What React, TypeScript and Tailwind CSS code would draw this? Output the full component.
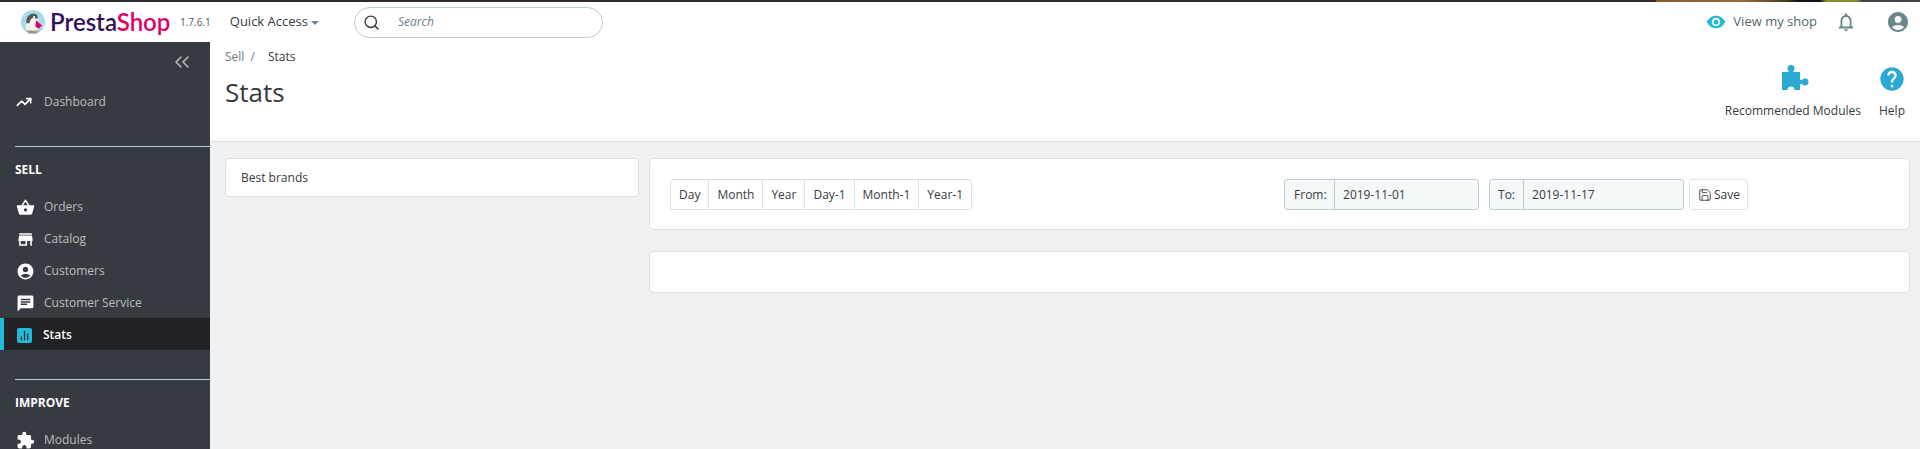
import React from "react";
import { BarChart2, ChevronsLeft, Save, Search, TrendingUp } from "lucide-react";
import { MdAccountCircle, MdChat, MdExtension, MdHelp, MdNotificationsNone, MdRemoveRedEye, MdShoppingBasket, MdStore } from "react-icons/md";

const font = { fontFamily: '"Open Sans", sans-serif' };

const SideItem: React.FC<{ icon: React.ReactNode; label: string; active?: boolean }> = ({ icon, label, active }) => (
  <div
    className={
      active
        ? "h-8 shrink-0 pt-[2px] flex items-center bg-[#202226] border-l-4 border-[#25b9d7] pl-[13px] text-white text-[12px] font-semibold"
        : "h-8 shrink-0 pt-[2px] flex items-center pl-4 text-[#bebebe] text-[12px]"
    }
  >
    <span className={active ? "w-[26px] flex items-center shrink-0" : "w-[28px] flex items-center shrink-0"}>{icon}</span>
    {label}
  </div>
);

const Logo = () => (
  <svg width="24" height="24" viewBox="0 0 20 20" className="block">
    <circle cx="10" cy="10" r="10" fill="#a6dbe7" />
    <path d="M4.5 18 C3.5 11 5 4 10 3.5 C14 3.5 15 8 14.5 12 L14 18 Z" fill="#f1f1ee" />
    <path d="M4.5 11 C4 6 7 3 10.5 3 C13.5 3.2 14.5 5.5 13.5 7.5 L10 6.5 L8 8 L7 11 Z" fill="#55585a" />
    <circle cx="11" cy="6" r="0.9" fill="#ffffff" />
    <path d="M12.5 8.5 L17.5 13 L15 15.5 L12 14 Z" fill="#df0067" />
    <path d="M4 17 H15 L13 19.6 H6.5 Z" fill="#a89a7c" />
  </svg>
);

const Puzzle = () => (
  <svg width="27" height="26" viewBox="0 0 27 26" className="block ml-[6px]">
    <rect x="0" y="7" width="18" height="18" fill="#2aa9d2" />
    <circle cx="9" cy="3.5" r="3.5" fill="#2aa9d2" />
    <rect x="7" y="4" width="4" height="4" fill="#2aa9d2" />
    <circle cx="23" cy="17" r="3.5" fill="#2aa9d2" />
    <rect x="17" y="15" width="4" height="4" fill="#2aa9d2" />
    <circle cx="9" cy="25" r="3.5" fill="#ffffff" />
  </svg>
);

const App: React.FC = () => {
  return (
    <div className="h-[449px] overflow-hidden bg-[#eff1f2] flex flex-col" style={font}>
      <div className="h-[2px] shrink-0 bg-[linear-gradient(90deg,#2c2c2c_0,#2c2c2c_1655px,#8a5a2c_1657px,#9a6a35_1745px,#4a3a20_1785px,#111_1800px,#111_1820px,#8f8a30_1826px,#8f8a30_1857px,#444_1862px,#444_100%)]" />
      <header className="h-[40px] bg-white flex items-center shrink-0 relative">
        <div className="ml-[21px]"><Logo /></div>
        <span className="ml-[5px] w-[118px] text-[24px] leading-none font-semibold text-[#34105a] whitespace-nowrap" style={{ fontFamily: '"Lato", sans-serif' }}>
          Presta<span className="text-[#df0067]">Shop</span>
        </span>
        <span className="ml-[12px] text-[10px] text-[#555]">1.7.6.1</span>
        <span className="ml-[19px] text-[13px] text-[#363a41]">Quick Access</span>
        <span className="ml-[3px] mt-[2px] border-x-[4px] border-t-[4px] border-x-transparent border-t-[#6c868e]" />
        <div className="ml-[35px] w-[249px] h-[31px] rounded-full border border-[#bbcdd2] flex items-center pl-[8px]">
          <Search size={17} className="text-[#363a41]" strokeWidth={2} />
          <span className="ml-[18px] text-[12px] italic text-[#6c868e]">Search</span>
        </div>
        <div className="ml-auto flex items-center">
          <MdRemoveRedEye size={20} className="text-[#25b9d7]" />
          <span className="ml-[7px] text-[13px] text-[#55666e]">View my shop</span>
          <MdNotificationsNone size={22} className="ml-[18px] text-[#6c868e]" />
          <MdAccountCircle size={24} className="ml-[29px] mr-[10px] text-[#6c868e]" />
        </div>
      </header>
      <div className="flex flex-1 min-h-0">
        <aside className="w-[210px] shrink-0 bg-[#363a41] flex flex-col">
          <div className="h-[40px] shrink-0 pr-[16px] flex items-center justify-end">
            <ChevronsLeft size={24} strokeWidth={1.5} className="text-[#bebebe]" />
          </div>
          <div className="h-[32px] shrink-0 mt-[4px] flex items-center pl-4 text-[#bebebe] text-[12px]">
            <span className="w-[28px] flex items-center"><TrendingUp size={16} className="text-white" strokeWidth={2.5} /></span>
            Dashboard
          </div>
          <div className="mt-[28px] shrink-0 ml-[15px] h-px bg-[#bbcdd2]" />
          <div className="mt-[15px] shrink-0 ml-[15px] text-[12px] font-bold text-white leading-4">SELL</div>
          <div className="mt-[12px] shrink-0 flex flex-col">
            <SideItem icon={<MdShoppingBasket size={19} className="text-white" />} label="Orders" />
            <SideItem icon={<MdStore size={19} className="text-white" />} label="Catalog" />
            <SideItem icon={<MdAccountCircle size={19} className="text-white" />} label="Customers" />
            <SideItem icon={<MdChat size={19} className="text-white" />} label="Customer Service" />
            <SideItem
              active
              icon={
                <span className="w-[15px] h-[15px] bg-[#25b9d7] rounded-[2px] flex items-center justify-center">
                  <BarChart2 size={11} className="text-[#202226]" strokeWidth={2.5} />
                </span>
              }
              label="Stats"
            />
          </div>
          <div className="mt-[29px] shrink-0 ml-[15px] h-px bg-[#bbcdd2]" />
          <div className="mt-[15px] shrink-0 ml-[15px] text-[12px] font-bold text-white leading-4">IMPROVE</div>
          <div className="mt-[12px] shrink-0">
            <SideItem icon={<MdExtension size={19} className="text-white" />} label="Modules" />
          </div>
        </aside>
        <main className="flex-1 min-w-0 flex flex-col">
          <div className="h-[100px] bg-white border-b border-[#dfdfdf] flex shrink-0 pl-[15px]">
            <div className="flex-1">
              <div className="mt-[7px] text-[12px] leading-4 text-[#6c7a80]">
                Sell <span className="ml-[3px] mr-[13px]">/</span>
                <span className="text-[#363a41]">Stats</span>
              </div>
              <h1 className="mt-[9px] text-[26px] leading-9 text-[#363a41]">Stats</h1>
            </div>
            <div className="flex pr-[14px] mt-[23px] text-[12px] text-[#363a41]">
              <div className="flex flex-col items-center">
                <Puzzle />
                <span className="mt-[11px]">Recommended Modules</span>
              </div>
              <div className="flex flex-col items-center ml-[17px]">
                <MdHelp size={28} className="text-[#2aa9d2]" />
                <span className="mt-[9px]">Help</span>
              </div>
            </div>
          </div>
          <div className="flex items-start pt-[16px] pl-[15px] pr-[10px] gap-[10px]">
            <div className="w-[414px] h-[39px] shrink-0 bg-white border border-[#dbe0e2] rounded-[4px] flex items-center pl-[15px] text-[12px] text-[#363a41]">
              Best brands
            </div>
            <div className="flex-1 min-w-0 flex flex-col gap-[21px]">
              <div className="h-[72px] bg-white border border-[#dbe0e2] rounded-[5px] flex items-center pl-[20px]">
                <div className="flex h-[31px] border border-[#dbe0e2] rounded-[3px] text-[12px] text-[#363a41] divide-x divide-[#dbe0e2]">
                  {["Day", "Month", "Year", "Day-1", "Month-1", "Year-1"].map((t) => (
                    <span key={t} className="px-[8px] pt-[2px] flex items-center">{t}</span>
                  ))}
                </div>
                <div className="ml-[312px] flex h-[31px] w-[195px] border border-[#bbcdd2] rounded-[3px] bg-[#f5f8f9] text-[12px] text-[#363a41]">
                  <span className="w-[50px] border-r border-[#bbcdd2] pl-[9px] pt-[2px] flex items-center">From:</span>
                  <span className="pl-[8px] pt-[2px] flex items-center">2019-11-01</span>
                </div>
                <div className="ml-[10px] flex h-[31px] w-[195px] border border-[#bbcdd2] rounded-[3px] bg-[#f5f8f9] text-[12px] text-[#363a41]">
                  <span className="w-[34px] border-r border-[#bbcdd2] pl-[8px] pt-[2px] flex items-center">To:</span>
                  <span className="pl-[8px] pt-[2px] flex items-center">2019-11-17</span>
                </div>
                <div className="ml-[5px] h-[31px] w-[59px] pl-[8px] pt-[2px] flex items-center border border-[#dbe6e9] rounded-[3px] text-[12px] text-[#363a41]">
                  <Save size={14} strokeWidth={1.5} className="mr-[2px]" />
                  Save
                </div>
              </div>
              <div className="h-[42px] bg-white border border-[#dbe0e2] rounded-[5px]" />
            </div>
          </div>
        </main>
      </div>
    </div>
  );
};

export default App;
